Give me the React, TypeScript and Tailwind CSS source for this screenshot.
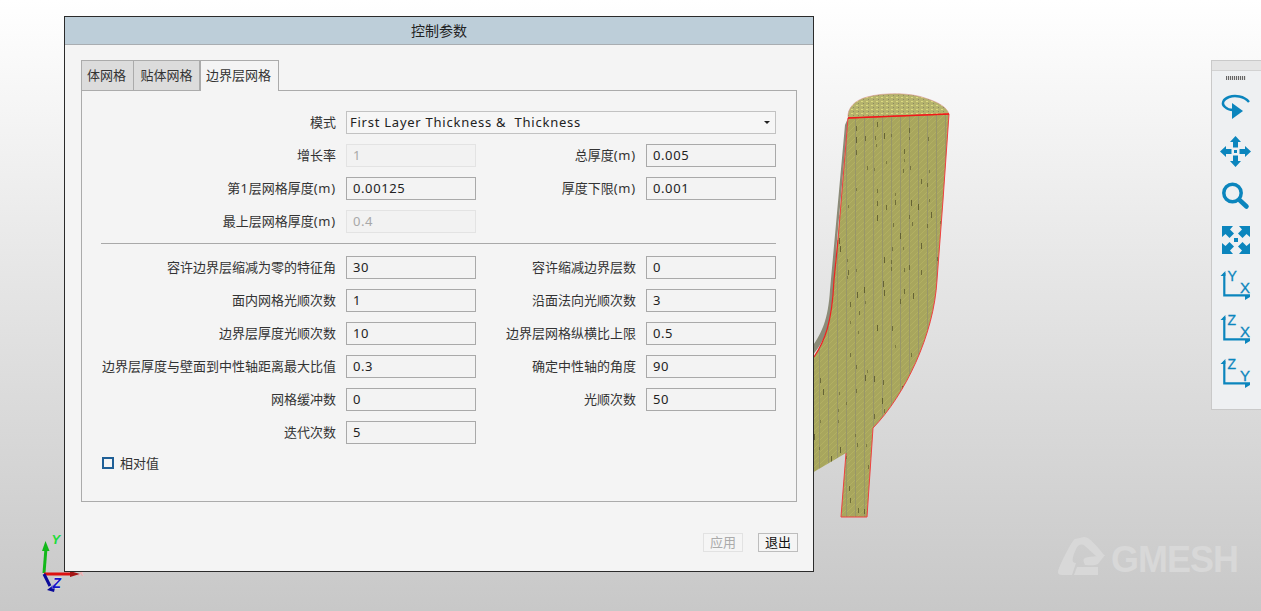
import React from "react";

const latin = "font-['Noto_Sans','Noto_Sans_CJK_SC',sans-serif]";

function Input({ value, disabled }: { value: string; disabled?: boolean }) {
  return (
    <div
      className={
        "h-[23px] w-[130px] border px-[6px] text-[13px] leading-[20px] tracking-[0.6px] " +
        (disabled ? "border-[#e3e3e3] bg-[#f2f2f2] text-[#a8a8a8]" : "border-[#a9a9a9] bg-[#f3f3f3] text-[#222]")
      }
    >
      {value}
    </div>
  );
}

function Label({ children }: { children: string }) {
  const parts = children.split(/([0-9()a-z]+)/);
  return (
    <div className="whitespace-nowrap pr-[10px] text-right text-[13px] leading-[23px] text-[#333]">
      {parts.map((p, i) =>
        i % 2 === 1 ? (
          <span key={i} className="tracking-[0.8px]">
            {p}
          </span>
        ) : (
          <span key={i}>{p}</span>
        )
      )}
    </div>
  );
}

const rowsA: [string, string, boolean?, string?, string?][] = [
  ["增长率", "1", true, "总厚度(m)", "0.005"],
  ["第1层网格厚度(m)", "0.00125", false, "厚度下限(m)", "0.001"],
  ["最上层网格厚度(m)", "0.4", true],
];
const rowsB: [string, string, boolean?, string?, string?][] = [
  ["容许边界层缩减为零的特征角", "30", false, "容许缩减边界层数", "0"],
  ["面内网格光顺次数", "1", false, "沿面法向光顺次数", "3"],
  ["边界层厚度光顺次数", "10", false, "边界层网格纵横比上限", "0.5"],
  ["边界层厚度与壁面到中性轴距离最大比值", "0.3", false, "确定中性轴的角度", "90"],
  ["网格缓冲数", "0", false, "光顺次数", "50"],
  ["迭代次数", "5", false],
];

function Rows({ rows }: { rows: [string, string, boolean?, string?, string?][] }) {
  return (
    <div className="grid grid-cols-[245px_130px_170px_130px] gap-y-[10px]">
      {rows.map((r) => (
        <React.Fragment key={r[0]}>
          <Label>{r[0]}</Label>
          <Input value={r[1]} disabled={r[2]} />
          {r[3] ? <Label>{r[3]}</Label> : <div />}
          {r[4] ? <Input value={r[4]} /> : <div />}
        </React.Fragment>
      ))}
    </div>
  );
}

function Model() {
  const outer = "L949 114 L943 200 L937 280 C934 335 905 395 873 428 L867 517 L841 517 L846 453";
  const body = "M848 118 " + outer + " L790 486 L790 380 L814 357 C824 342 832 325 834 280 Z";
  const specks: React.ReactNode[] = [];
  let seed = 7;
  for (let x = 792; x < 950; x += 9) {
    for (let y = 122; y < 515; y += 11) {
      seed = (seed * 97 + 31) % 1009;
      if (seed % 3 === 0) {
        specks.push(
          <rect key={x + "-" + y} x={x + (seed % 5)} y={y + (seed % 7)} width="1" height={3 + (seed % 4)} fill="#54522a" opacity={0.5 + (seed % 4) / 10} />
        );
      }
    }
  }
  return (
    <svg className="absolute left-0 top-0" width="1261" height="611" viewBox="0 0 1261 611">
      <defs>
        <pattern id="mesh" width="9" height="6" patternUnits="userSpaceOnUse">
          <rect width="9" height="6" fill="#a8a65d" />
          <path d="M0 3 L3 0 M3 6 L6 3 M6 3 L9 0" stroke="#b2b062" strokeWidth="1" />
          <path d="M0.5 0 V6" stroke="#93926b" strokeWidth="1" opacity="0.8" />
        </pattern>
        <pattern id="cap" width="5" height="4" patternUnits="userSpaceOnUse">
          <rect width="5" height="4" fill="#b5b36c" />
          <rect x="1" y="1" width="2" height="1" fill="#dcda80" />
          <rect x="3" y="3" width="1" height="1" fill="#8d8b62" />
        </pattern>
        <clipPath id="bodyClip">
          <path d={body} />
        </clipPath>
      </defs>
      <path d="M848 118 C847 108 855 100 867 97 C885 92 912 93 925 98 C938 102 947 107 949 114 Z" fill="url(#cap)" stroke="#d98a8a" strokeWidth="0.5" />
      <path d="M845 125 L848 118 L837 240 L834 290 C832 325 824 342 812 356 L812 347 C822 332 828 320 830 290 Z" fill="#8b8b78" />
      <path d={body} fill="url(#mesh)" />
      <g clipPath="url(#bodyClip)">{specks}</g>
      <path d={"M838 240 L848 118 " + outer} fill="none" stroke="#ef4040" strokeWidth="1" />
      <path d="M848 118 L949 114" fill="none" stroke="#f01818" strokeWidth="1.3" />
      <path d="M838 240 L834 280 C832 325 824 342 814 357" fill="none" stroke="#ee2222" strokeWidth="1.2" />
      {/* triad */}
      <path d="M44 573 L46 548" stroke="#12b81a" strokeWidth="3" />
      <path d="M42 551 L45.5 541 L49.5 551 Z" fill="#12b81a" />
      <path d="M44 574 H72" stroke="#dd1111" strokeWidth="3" />
      <path d="M70 571 L80 574 L70 577 Z" fill="#a51515" />
      <path d="M44 574 L50 586" stroke="#0a0a9a" strokeWidth="3" />
      <path d="M47 590 L56 583 L54 592 Z" fill="#0a0a9a" />
      <text x="51.5" y="544" fontSize="13" fontStyle="italic" fontWeight="700" fill="#1edc3c" fontFamily="Liberation Sans, sans-serif">Y</text>
      <text x="78" y="576" fontSize="9" fontStyle="italic" fontWeight="700" fill="#f2b0b0" fontFamily="Liberation Sans, sans-serif">X</text>
      <text x="52.5" y="588" fontSize="14" fontStyle="italic" fontWeight="700" fill="#1414c8" stroke="#fff" strokeWidth="0.6" paintOrder="stroke" fontFamily="Liberation Sans, sans-serif">Z</text>
      {/* logo emblem */}
      <g fill="#d8d8d8">
        <path d="M1058 572 C1058 568 1072 540 1075 539 L1084 537 C1088 537 1092 540 1105 556 L1096 556 L1085 546 C1081 543 1078 545 1076 549 C1072 558 1071 563 1076 563 L1072 575 L1062 575 C1059 575 1058 574 1058 572 Z" />
        <path d="M1085 558 C1092 556 1100 556 1105 555 L1098 564 C1094 566 1088 565 1085 565 C1083 561 1083 559 1085 558 Z" />
        <path d="M1077 567 H1098 V575 H1074 Z" />
      </g>
    </svg>
  );
}

const c = "#0b85bd";

function AxisIcon({ a, b }: { a: string; b: string }) {
  return (
    <svg width="32" height="32" viewBox="0 0 32 32">
      <path d="M4.3 5 V27.3 H30" fill="none" stroke={c} strokeWidth="2.2" />
      <path d="M0.5 8 L5.4 3 V8 Z M30 27 V29 L25 32 V28 Z" fill={c} />
      <text x="7.5" y="13" fontSize="14" fill={c} stroke={c} strokeWidth="0.3" fontFamily="Liberation Sans, sans-serif">{a}</text>
      <text x="20" y="24.5" fontSize="15" fill={c} stroke={c} strokeWidth="0.3" fontFamily="Liberation Sans, sans-serif">{b}</text>
    </svg>
  );
}

function Toolbar() {
  const cell = "flex h-[44px] items-center justify-center pr-px";
  const up = "15.5,0 21,6 18,6 18,11.5 13,11.5 13,6 10,6";
  const tl = "2,2 13,2 10,5.5 14,9.5 9.5,14 5.5,10 2,13";
  return (
    <div className="absolute left-[1211px] top-[60px] h-[350px] w-[50px] border-y border-l border-[#c9c9c9] bg-[#eef0f2]">
      <div className="h-[10px] border-b border-[#d2d2d2] bg-[#e4e4e4]" />
      <div className="ml-[14px] mt-[5px] h-[4px] w-[20px] bg-[repeating-linear-gradient(90deg,#666_0,#666_1px,#ddd_1px,#ddd_2px)]" />
      <div className="mt-[6px] flex flex-col">
        <div className={cell}>
          <svg width="32" height="32" viewBox="0 0 32 32">
            <path d="M29 10 C24 4 15 3 9 5 C3 7 1 12 5 15 C7 17 10 18 13 18" fill="none" stroke={c} strokeWidth="2.4" />
            <path d="M12 11 L23 19 L12 27 Z" fill={c} />
          </svg>
        </div>
        <div className={cell}>
          <svg width="32" height="32" viewBox="0 0 32 32" fill={c}>
            <polygon points={up} />
            <polygon points={up} transform="rotate(90 15.5 15.5)" />
            <polygon points={up} transform="rotate(180 15.5 15.5)" />
            <polygon points={up} transform="rotate(270 15.5 15.5)" />
            <rect x="14" y="14" width="3" height="3" />
          </svg>
        </div>
        <div className={cell}>
          <svg width="32" height="32" viewBox="0 0 32 32">
            <circle cx="12.5" cy="13" r="8.7" fill="none" stroke={c} strokeWidth="3.5" />
            <path d="M19.5 20 L26.5 26.5" stroke={c} strokeWidth="4.6" strokeLinecap="round" />
          </svg>
        </div>
        <div className={cell}>
          <svg width="32" height="32" viewBox="0 0 32 32" fill={c}>
            <polygon points={tl} />
            <polygon points={tl} transform="rotate(90 16 16)" />
            <polygon points={tl} transform="rotate(180 16 16)" />
            <polygon points={tl} transform="rotate(270 16 16)" />
            <rect x="14" y="14" width="4" height="4" />
          </svg>
        </div>
        <div className={cell}><AxisIcon a="Y" b="X" /></div>
        <div className={cell}><AxisIcon a="Z" b="X" /></div>
        <div className={cell}><AxisIcon a="Z" b="Y" /></div>
      </div>
    </div>
  );
}

function Dialog() {
  return (
    <div className="absolute left-[64px] top-[16px] h-[556px] w-[750px] border border-[#2b2b2b] bg-[#f4f4f4]">
      <div className="h-[28px] border-b border-[#a8adb1] bg-[#bdced9] text-center text-[14px] leading-[28px] text-[#222]">控制参数</div>
      <div className="pl-[16px] pt-[15px]">
        <div className="flex h-[30px] items-stretch text-[13px] text-[#333]">
          <div className="w-[53px] border border-b-0 border-[#ababab] bg-[#dcdcdc] pr-[2px] text-center leading-[28px]">体网格</div>
          <div className="w-[66px] border border-b-0 border-l-0 border-[#ababab] bg-[#dcdcdc] text-center leading-[28px]">贴体网格</div>
          <div className="relative z-10 -mb-px w-[79px] border border-b-0 border-[#ababab] bg-[#f4f4f4] pr-[2px] text-center leading-[28px]">边界层网格</div>
        </div>
        <div className="h-[412px] w-[716px] border border-[#ababab] pl-[19px] pt-[20px]">
          <div className="grid grid-cols-[245px_430px]">
            <Label>模式</Label>
            <div className="flex h-[23px] w-[430px] items-center justify-between border border-[#c2c2c2] bg-[#f6f6f6] pl-[3px] pr-[5px] text-[13px] tracking-[0.75px] text-[#222]">
              <span className="whitespace-pre">First Layer Thickness &amp;  Thickness</span>
              <span className="h-0 w-0 border-x-[3px] border-t-[3px] border-x-transparent border-t-[#222]" />
            </div>
          </div>
          <div className="mt-[10px]">
            <Rows rows={rowsA} />
          </div>
          <div className="mb-[12px] mt-[10px] h-px w-[675px] bg-[#a9a9a9]" />
          <Rows rows={rowsB} />
          <label className="ml-px mt-[13px] flex items-center gap-[6px] text-[13px] leading-[12px] text-[#333]">
            <span className="h-[12px] w-[12px] border-2 border-[#1f5f96] bg-[#f4f4f4]" />
            相对值
          </label>
        </div>
        <div className="mt-[31px] flex justify-end gap-[15px] pr-[15px] text-[13px]">
          <div className="h-[19px] w-[40px] border border-[#e2e2e2] bg-[#f5f5f5] text-center leading-[16px] text-[#ababab]">应用</div>
          <div className="h-[19px] w-[40px] border border-[#bdbdbd] bg-[#f5f5f5] text-center leading-[16px] text-[#111]">退出</div>
        </div>
      </div>
    </div>
  );
}

export default function App() {
  return (
    <div className={"relative h-[611px] w-[1261px] overflow-hidden bg-gradient-to-b from-white to-[#c8c8c8] " + latin}>
      <Model />
      <div className="absolute left-[1111px] top-[540px] font-['Liberation_Sans',sans-serif] text-[36px] font-bold leading-[40px] tracking-[-1px] text-[#d8d8d8]">GMESH</div>
      <Toolbar />
      <Dialog />
    </div>
  );
}
